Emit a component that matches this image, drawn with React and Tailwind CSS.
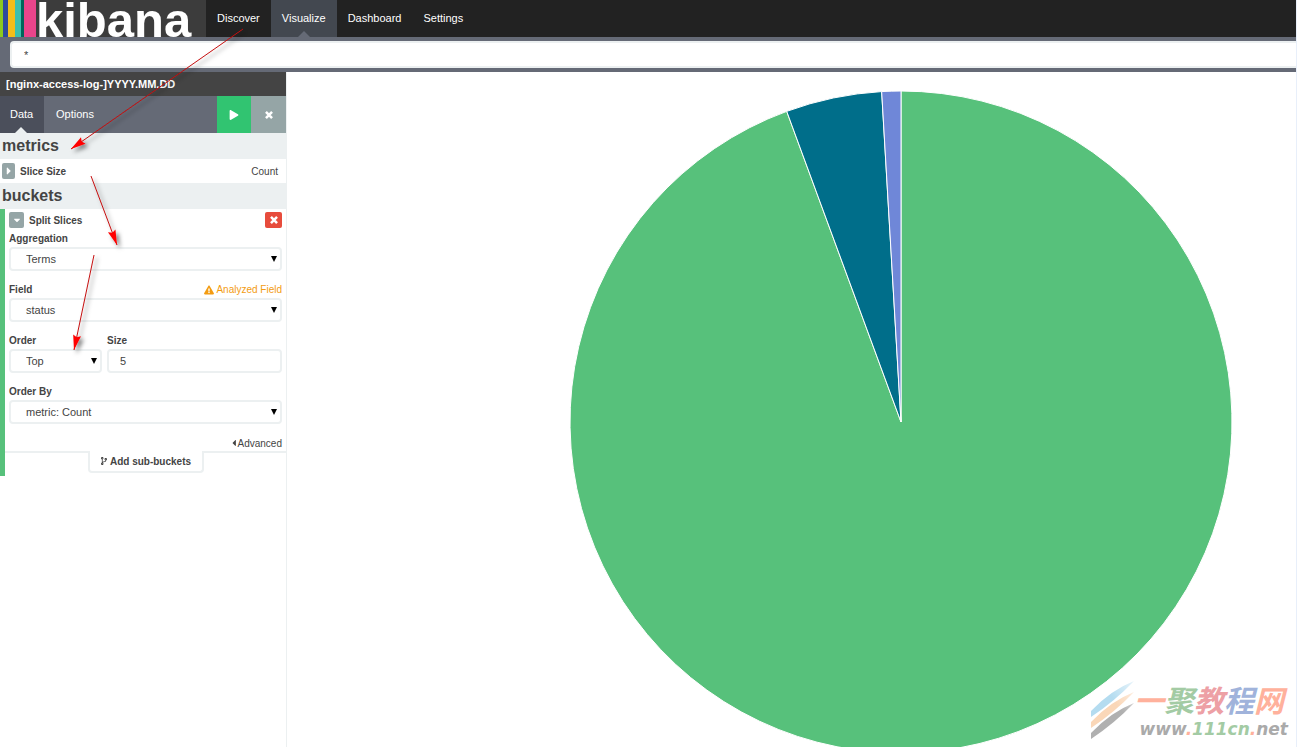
import { FaPlay, FaCaretRight, FaCaretDown, FaCaretLeft, FaExclamationTriangle, FaCodeBranch } from 'react-icons/fa';

const NAV = ['Discover', 'Visualize', 'Dashboard', 'Settings'];

const SLICES = [
  { key: 'a', share: 94.39, color: '#57c17b' },
  { key: 'b', share: 4.68, color: '#006e8a' },
  { key: 'c', share: 0.93, color: '#6f87d8' },
];

const ARROWS = [
  { from: [243, 29], to: [71, 149] },
  { from: [91, 176], to: [117, 245] },
  { from: [94, 255], to: [74, 350] },
];

const CrossIcon = ({ className }) => (
  <svg viewBox="0 0 10 10" className={className} aria-hidden="true">
    <path d="M1.2 1.2 8.8 8.8M8.8 1.2 1.2 8.8" stroke="currentColor" strokeWidth="3.2" fill="none" />
  </svg>
);

function Logo() {
  return (
    <a href="#home" aria-label="kibana" className="flex w-[206px] h-full shrink-0 overflow-hidden bg-[#3c3c3c] text-white">
      <span className="w-[3px] bg-[#8dc91f]"></span>
      <span className="w-[5px] bg-[#2f4a9c]"></span>
      <span className="w-[7px] bg-[#f4bd19]"></span>
      <span className="w-[6px] bg-[#3cbfae]"></span>
      <span className="w-[3px] bg-[#00665a]"></span>
      <span className="w-3 bg-[#ea458b]"></span>
      <span className="text-[49px] leading-[40px] font-bold">kibana</span>
    </a>
  );
}

function Navbar() {
  return (
    <nav className="flex h-[37px] bg-[#222]">
      <Logo />
      {NAV.map((name) => {
        const active = name === 'Visualize';
        return (
          <a
            key={name}
            href={`#${name.toLowerCase()}`}
            className={`relative flex items-center px-[11px] text-[11px] text-white ${active ? 'bg-[#434850]' : ''}`}
          >
            {name}
            {active && (
              <svg viewBox="0 0 12 6" className="absolute bottom-0 left-1/2 -translate-x-1/2 w-3 h-[6px]">
                <path d="M0 6 6 0 12 6Z" fill="#656a76" />
              </svg>
            )}
          </a>
        );
      })}
    </nav>
  );
}

function Select({ id, value }) {
  return (
    <div className="relative">
      <select
        id={id}
        defaultValue={value}
        className="block w-full h-6 appearance-none rounded border-2 border-[#ecf0f1] bg-white pl-[15px] pr-5 text-[11px] leading-4 text-[#444]"
      >
        <option>{value}</option>
      </select>
      <svg viewBox="0 0 6 6" className="pointer-events-none absolute right-[5px] top-[9px] w-[6px] h-[6px]">
        <path d="M0 0H6L3 6Z" fill="#000" />
      </svg>
    </div>
  );
}

function Label({ htmlFor, children }) {
  return (
    <label htmlFor={htmlFor} className="block h-4 leading-4 font-bold">
      {children}
    </label>
  );
}

function Sidebar() {
  return (
    <aside className="w-[287px] shrink-0 border-r border-[#ecf0f1] text-[10px] text-[#444]">
      <div className="h-6 px-[6px] text-[11px] leading-6 font-bold text-white bg-[#444]">[nginx-access-log-]YYYY.MM.DD</div>

      <div className="flex h-[37px] bg-[#656a76] text-[11px] text-white">
        <a href="#data" className="relative flex w-11 items-center pl-[10px] bg-[#4b4f5b]">
          Data
          <svg viewBox="0 0 12 6" className="absolute bottom-0 left-[15px] w-3 h-[6px]">
            <path d="M0 6 6 0 12 6Z" fill="#ecf0f1" />
          </svg>
        </a>
        <a href="#options" className="flex items-center px-3">Options</a>
        <button type="button" aria-label="Apply" className="ml-auto flex w-[34px] items-center justify-center bg-[#31c471]">
          <FaPlay className="w-[10px] h-[10px]" />
        </button>
        <button type="button" aria-label="Discard" className="flex w-[35px] items-center justify-center bg-[#95a5a6]">
          <CrossIcon className="w-2 h-2" />
        </button>
      </div>

      <h2 className="h-[26px] px-[2px] text-base leading-[26px] font-bold bg-[#ecf0f1]">metrics</h2>
      <div className="flex h-6 items-center pl-[2px] pr-2">
        <button type="button" aria-label="Toggle metric" className="flex w-[13px] h-4 items-center justify-center rounded-xs bg-[#95a5a6] text-white">
          <FaCaretRight className="w-3 h-3" />
        </button>
        <span className="ml-[5px] font-bold">Slice Size</span>
        <span className="ml-auto">Count</span>
      </div>

      <h2 className="h-[26px] px-[2px] text-base leading-[26px] font-bold bg-[#ecf0f1]">buckets</h2>
      <div className="border-l-[5px] border-[#57c17b] pb-[3px]">
        <form className="px-1">
          <div className="flex h-[22px] items-center">
            <button type="button" aria-label="Toggle bucket" className="flex w-[15px] h-4 items-center justify-center rounded-xs bg-[#95a5a6] text-white">
              <FaCaretDown className="w-[10px] h-[10px]" />
            </button>
            <span className="ml-[5px] font-bold">Split Slices</span>
            <button type="button" aria-label="Remove bucket" className="ml-auto flex w-[17px] h-4 items-center justify-center rounded-xs bg-[#e74c3c] text-white">
              <CrossIcon className="w-2 h-2" />
            </button>
          </div>

          <div className="flex flex-col gap-[11px]">
            <div>
              <Label htmlFor="agg">Aggregation</Label>
              <Select id="agg" value="Terms" />
            </div>
            <div>
              <div className="flex justify-between">
                <Label htmlFor="field">Field</Label>
                <span className="flex items-center gap-[2px] leading-4 text-[#f39c12]">
                  <FaExclamationTriangle className="w-[10px] h-[10px]" /> Analyzed Field
                </span>
              </div>
              <Select id="field" value="status" />
            </div>
            <div className="grid grid-cols-[93px_1fr] gap-[5px]">
              <div>
                <Label htmlFor="order">Order</Label>
                <Select id="order" value="Top" />
              </div>
              <div>
                <Label htmlFor="size">Size</Label>
                <input
                  id="size"
                  type="text"
                  defaultValue="5"
                  className="block w-full h-6 rounded border-2 border-[#ecf0f1] bg-white px-[11px] text-[11px] leading-4"
                />
              </div>
            </div>
            <div>
              <Label htmlFor="orderby">Order By</Label>
              <Select id="orderby" value="metric: Count" />
            </div>
            <a href="#advanced" className="flex h-4 items-center justify-end">
              <FaCaretLeft className="w-2 h-[10px]" />Advanced
            </a>
          </div>
        </form>

        <div className="flex justify-center border-t-2 border-[#ecf0f1]">
          <button type="button" className="-mt-[2px] flex h-[22px] w-[116px] items-center justify-center gap-[2px] rounded-b border-2 border-t-0 border-[#ecf0f1] bg-white font-bold">
            <FaCodeBranch className="w-2 h-2" /> Add sub-buckets
          </button>
        </div>
      </div>
    </aside>
  );
}

function Pie() {
  const r = 331;
  const total = SLICES.reduce((sum, s) => sum + s.share, 0);
  const point = (part) => {
    const a = (part / total) * Math.PI * 2;
    return `${r * Math.sin(a)} ${-r * Math.cos(a)}`;
  };
  let start = 0;

  return (
    <svg viewBox="-332 -332 664 664" className="w-full max-w-[664px] shrink-0 self-start" role="img" aria-label="Status by count">
      {SLICES.map((s) => {
        const end = start + s.share;
        const large = s.share / total > 0.5 ? 1 : 0;
        const d = `M0 0L${point(start)}A${r} ${r} 0 ${large} 1 ${point(end)}Z`;
        start = end;
        return <path key={s.key} d={d} fill={s.color} stroke="#fff" strokeWidth="1" />;
      })}
    </svg>
  );
}

// Red pointers that walk through the steps
function Arrows() {
  return (
    <svg width="290" height="370" className="pointer-events-none absolute left-0 top-0" aria-hidden="true">
      <defs>
        <filter id="shade" x="-30%" y="-30%" width="160%" height="160%">
          <feDropShadow dx="3" dy="3" stdDeviation="2" floodColor="#000" floodOpacity="0.5" />
        </filter>
      </defs>
      {ARROWS.map(({ from, to }) => {
        const angle = (Math.atan2(to[1] - from[1], to[0] - from[0]) * 180) / Math.PI;
        return (
          <g key={from.join()} filter="url(#shade)">
            <line x1={from[0]} y1={from[1]} x2={to[0]} y2={to[1]} stroke="#c40d0d" strokeWidth="1" />
            <path d="M0 0-15-4-13 0-15 4Z" fill="#f00" transform={`translate(${to.join()}) rotate(${angle})`} />
          </g>
        );
      })}
    </svg>
  );
}

function Watermark() {
  return (
    <div className="absolute bottom-0 right-1 flex h-[68px] w-[201px] justify-end">
      <svg viewBox="0 0 44 60" className="absolute left-0 top-[2px] w-11 h-[60px]" aria-hidden="true">
        <defs>
          <linearGradient id="fade" x1="0" x2="1" y1="1" y2="0">
            <stop offset="0.6" stopColor="#fff" />
            <stop offset="1" stopColor="#fff" stopOpacity="0.3" />
          </linearGradient>
          <mask id="streaks">
            <rect width="44" height="60" fill="url(#fade)" />
          </mask>
        </defs>
        <g mask="url(#streaks)">
          <path d="M0 30Q20 9 43 0Q24 20 0 36Z" fill="#b4dcf0" />
          <path d="M0 41Q20 20 43 11Q24 31 0 47Z" fill="#fad7b8" />
          <path d="M0 52Q20 31 43 22Q24 42 0 58Z" fill="#b0b0b0" />
        </g>
      </svg>
      <div className="font-bold italic text-right">
        <div className="font-['Noto_Sans_CJK_SC',sans-serif] text-[30px] leading-10 pr-2">
          <span className="text-[#ffb19c]">一</span>
          <span className="text-[#a3cba4]">聚</span>
          <span className="text-[#eda0a5]">教</span>
          <span className="text-[#a0b3db]">程</span>
          <span className="text-[#ffb19c]">网</span>
        </div>
        <div className="font-['DejaVu_Sans',sans-serif] text-[17px] leading-5 text-[#aaa] pr-1">
          www<span className="text-[#ffb19c]">.</span>
          <span className="text-[#a3cba4]">111cn</span>
          <span className="text-[#ffb19c]">.</span>net
        </div>
      </div>
    </div>
  );
}

export default function App() {
  return (
    <div className="relative flex h-screen flex-col overflow-hidden border-r border-[#e8effa] bg-white font-['Liberation_Sans',Arial,sans-serif]">
      <Navbar />
      <div className="h-[35px] shrink-0 bg-[#656a76] pt-1 pl-[10px]">
        <input
          type="text"
          aria-label="Query"
          defaultValue="*"
          className="block h-[27px] w-full rounded-l border-2 border-r-0 border-[#ecf0f1] bg-white px-3 text-[11px] text-[#444]"
        />
      </div>
      <div className="flex min-h-0 flex-1">
        <Sidebar />
        <main className="flex flex-1 justify-center overflow-hidden pt-[18px] pl-[218px]">
          <Pie />
        </main>
      </div>
      <Arrows />
      <Watermark />
    </div>
  );
}
